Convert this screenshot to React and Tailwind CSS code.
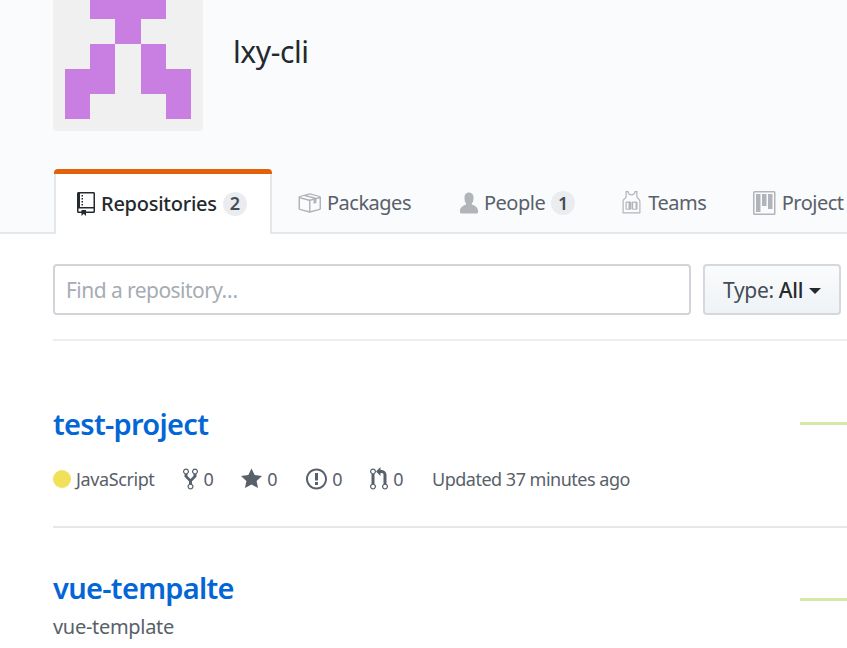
function Oct({ w, h = 16, sw, sh, d, fill }) {
  return (
    <svg viewBox={`0 0 ${w} ${h}`} width={sw} height={sh} fill={fill} className="shrink-0">
      <path fillRule="evenodd" d={d} />
    </svg>
  );
}
const icons = {
  repo: "M4 9H3V8h1v1zm0-3H3v1h1V6zm0-2H3v1h1V4zm0-2H3v1h1V2zm8-1v12c0 .55-.45 1-1 1H6v2l-1.5-1.5L3 16v-2H1c-.55 0-1-.45-1-1V1c0-.55.45-1 1-1h10c.55 0 1 .45 1 1zm-1 10H1v2h2v-1h3v1h5v-2zm0-10H2v9h9V1z",
  pkg: "M1 4.27v7.47c0 .45.3.84.75.97l6.5 1.73c.16.05.34.05.5 0l6.5-1.73c.45-.13.75-.52.75-.97V4.27c0-.45-.3-.84-.75-.97l-6.5-1.74a1.4 1.4 0 0 0-.5 0L1.75 3.3c-.45.13-.75.52-.75.97zm7 9.09l-6-1.59V5l6 1.61v6.75zM2 4l2.5-.67L11 5.06l-2.5.67L2 4zm13 7.77l-6 1.59V6.61l2-.55V8.5l2-.53V5.53L15 5v6.77zm-2-7.24L6.5 2.8l2-.53L15 4l-2 .53z",
  person: "M12 14.002a.998.998 0 0 1-.998.998H1.001A1 1 0 0 1 0 13.999V13c0-2.633 4-4 4-4s.229-.409 0-1c-.841-.62-.944-1.59-1-4 .173-2.413 1.867-3 3-3s2.827.586 3 3c-.056 2.41-.159 3.38-1 4-.229.59 0 1 0 1s4 1.367 4 4v1.002z",
  jersey: "M3 0h2c0 1.500 1 2.200 2 2.200S9 1.500 9 0h2v3.500c0 1.200 2 1.500 2 3.500v7.500c0 .3-.2.5-.5.5h-11c-.3 0-.5-.2-.5-.5V7c0-2 2-2.300 2-3.500V0zm.8.800v2.700C3.800 5.200 1.800 5.500 1.800 7v7.200h10.400V7c0-1.500-2-1.800-2-3.500V.8h-.5C9.400 2.300 8.300 3 7 3S4.600 2.300 4.300.8h-.5zM3.500 7h3l.5.500v4.500l-.5.500h-3L3 12V7.500L3.500 7zm.3.800v4h1.200v-4H3.800zm4 -.8h2.700l.5.500V12l-.5.500H7.800L7.300 12V7.500L7.800 7zm.3.800v4h1.600v-4H8.100z",
  project: "M10 12h3V2h-3v10zm-4-2h3V2H6v8zm-4 4h3V2H2v12zm-1 1h13V1H1v14zM14 0H1a1 1 0 0 0-1 1v14a1 1 0 0 0 1 1h13a1 1 0 0 0 1-1V1a1 1 0 0 0-1-1z",
  fork: "M8 1a1.993 1.993 0 0 0-1 3.72V6L5 8 3 6V4.72A1.993 1.993 0 0 0 2 1a1.993 1.993 0 0 0-1 3.72V6.5l3 3v1.78A1.993 1.993 0 0 0 5 15a1.993 1.993 0 0 0 1-3.72V9.5l3-3V4.72A1.993 1.993 0 0 0 8 1zM2 4.2C1.34 4.2.8 3.65.8 3c0-.65.55-1.2 1.2-1.2.65 0 1.2.55 1.2 1.2 0 .65-.55 1.2-1.2 1.2zm3 10c-.66 0-1.2-.55-1.2-1.2 0-.65.55-1.2 1.2-1.2.65 0 1.2.55 1.2 1.2 0 .65-.55 1.2-1.2 1.2zm3-10c-.66 0-1.2-.55-1.2-1.2 0-.65.55-1.2 1.2-1.2.65 0 1.2.55 1.2 1.2 0 .65-.55 1.2-1.2 1.2z",
  star: "M14 6l-4.9-.64L7 1 4.9 5.36 0 6l3.6 3.26L2.67 14 7 11.67 11.33 14l-.93-4.74L14 6z",
  issue: "M7 2.3c3.14 0 5.7 2.56 5.7 5.7s-2.56 5.7-5.7 5.7A5.71 5.71 0 0 1 1.3 8c0-3.14 2.56-5.7 5.7-5.7zM7 1C3.14 1 0 4.14 0 8s3.14 7 7 7 7-3.14 7-7-3.14-7-7-7zm1 3H6v5h2V4zm0 6H6v2h2v-2z",
  pr: "M11 11.28V5c-.03-.78-.34-1.47-.94-2.06C9.46 2.35 8.78 2.03 8 2H7V0L4 3l3 3V4h1c.27.02.48.11.69.31.21.2.3.42.31.69v6.28A1.993 1.993 0 0 0 10 15a1.993 1.993 0 0 0 1-3.72zm-1 2.92c-.66 0-1.2-.55-1.2-1.2 0-.65.55-1.2 1.2-1.2.65 0 1.2.55 1.2 1.2 0 .65-.55 1.2-1.2 1.2zM4 3c0-1.11-.89-2-2-2a1.993 1.993 0 0 0-1 3.72v6.56A1.993 1.993 0 0 0 2 15a1.993 1.993 0 0 0 1-3.72V4.72c.59-.34 1-.98 1-1.72zm-.8 10c0 .66-.55 1.2-1.2 1.2-.65 0-1.2-.55-1.2-1.2 0-.65.55-1.2 1.2-1.2.65 0 1.2.55 1.2 1.2zM2 4.2C1.34 4.2.8 3.65.8 3c0-.65.55-1.2 1.2-1.2.65 0 1.2.55 1.2 1.2 0 .65-.55 1.2-1.2 1.2z",
};
function Counter({ children }) {
  return (
    <span className="ml-[6px] flex h-[24px] w-[24px] items-center justify-center rounded-full bg-[#eaecef] text-[18px] font-semibold tracking-normal text-[#444d56]">
      {children}
    </span>
  );
}
function Tab({ icon, w, children, count, className }) {
  return (
    <div className={`flex shrink-0 items-center text-[#586069] ${className}`}>
      <Oct w={w} sw={w * 1.5} sh={24} d={icons[icon]} fill="#b1b5b9" />
      <span className="ml-[6px]">{children}</span>
      {count && <Counter>{count}</Counter>}
    </div>
  );
}
function Stat({ icon, w, n, className }) {
  return (
    <div className={`flex items-center ${className}`}>
      <Oct w={w} sw={w * 1.5} sh={24} d={icons[icon]} fill="#586069" />
      <span className="ml-[5px]">{n}</span>
    </div>
  );
}
export default function App() {
  return (
    <div className="h-[648px] w-[847px] overflow-hidden bg-white font-['Noto_Sans',sans-serif]">
      <div className="flex h-[234px] flex-col border-b-2 border-[#e5e8eb] bg-[#fafbfd] pl-[53px]">
        <div className="-mt-[19px] flex items-center">
          <div className="h-[150px] w-[150px] shrink-0 overflow-hidden rounded-[4px] bg-[#f0f0f0]">
            <svg viewBox="0 0 150 150" width="150" height="150" fill="#c97fe1">
              <path d="M37 13h76v25H88v25H62V38H37zM37 63h25v50H37v25H12V88h25zM88 63h25v25h25v50h-25v-25H88z" />
            </svg>
          </div>
          <div className="ml-[30px] mt-[-8px] text-[30px] leading-[40px] tracking-[-0.4px] text-[#24292e]">lxy-cli</div>
        </div>
        <div className="mt-[38px] flex h-[65px] shrink-0 text-[20px] tracking-[-0.5px]">
          <div className="relative ml-[1px] flex h-[65px] w-[218px] shrink-0 items-center rounded-t-[4px] border-x-2 border-[#e5e8eb] bg-white pl-[21px] pt-[4px] font-medium tracking-[-0.25px] text-[#24292e]">
            <div className="absolute -inset-x-[2px] top-0 h-[5px] rounded-t-[4px] bg-[#e36209]" />
            <Oct w={12} sw={18} sh={24} d={icons.repo} fill="#24292e" />
            <span className="ml-[6px]">Repositories</span>
            <Counter>2</Counter>
          </div>
          <Tab icon="pkg" w={16} className="ml-[25px] pt-[3px]">Packages</Tab>
          <Tab icon="person" w={12} count="1" className="ml-[49px] pt-[3px]">People</Tab>
          <Tab icon="jersey" w={14} className="ml-[46px] pt-[3px]">Teams</Tab>
          <Tab icon="project" w={15} className="ml-[47px] pt-[3px]">Project</Tab>
        </div>
      </div>
      <div className="pl-[53px]">
        <div className="flex h-[107px] items-start border-b-2 border-[#eceef0] pt-[30px]">
          <div className="flex h-[51px] w-[638px] items-center rounded-[4px] border-2 border-[#d1d5da] bg-white pl-[11px] pt-[3px] text-[21px] tracking-[-0.55px] text-[#a6acb3]">
            Find a repository…
          </div>
          <div className="ml-[12px] flex h-[51px] w-[138px] items-center justify-center rounded-[4px] border-2 border-[#d5d8dc] bg-gradient-to-b from-[#fafbfc] to-[#eff3f6] pt-[3px] text-[21px] font-medium tracking-[-0.3px] text-[#24292e]">
            <span className="font-normal text-[#444d56]">Type:</span>
            <span className="ml-[5px]">All</span>
            <span className="ml-[6px] h-0 w-0 border-x-[6px] border-t-[6px] border-x-transparent border-t-[#24292e]" />
          </div>
        </div>
        <div className="relative h-[187px] border-b-2 border-[#e5e8eb]">
          <div className="absolute right-0 top-[81px] h-[3px] w-[47px] bg-[#d4e8a7]" />
          <div className="pt-[63px] text-[29px] font-semibold leading-[40px] tracking-[-0.7px] text-[#0366d6]">test-project</div>
          <div className="mt-[21px] flex h-[28px] items-center text-[18px] tracking-[-0.4px] text-[#586069]">
            <span className="h-[18px] w-[18px] rounded-full bg-[#f1e05a]" />
            <span className="ml-[5px]">JavaScript</span>
            <Stat icon="fork" w={10} n="0" className="ml-[29px]" />
            <Stat icon="star" w={14} n="0" className="ml-[28px]" />
            <Stat icon="issue" w={14} n="0" className="ml-[29px]" />
            <Stat icon="pr" w={12} n="0" className="ml-[28px]" />
            <span className="ml-[29px] tracking-[-0.5px]">Updated 37 minutes ago</span>
          </div>
        </div>
        <div className="relative">
          <div className="absolute right-0 top-[70px] h-[3px] w-[47px] bg-[#d4e8a7]" />
          <div className="pt-[40px] text-[29px] font-semibold leading-[40px] tracking-[-0.7px] text-[#0366d6]">vue-tempalte</div>
          <div className="mt-[5px] text-[20px] leading-[28px] tracking-[-0.3px] text-[#586069]">vue-template</div>
        </div>
      </div>
    </div>
  );
}
